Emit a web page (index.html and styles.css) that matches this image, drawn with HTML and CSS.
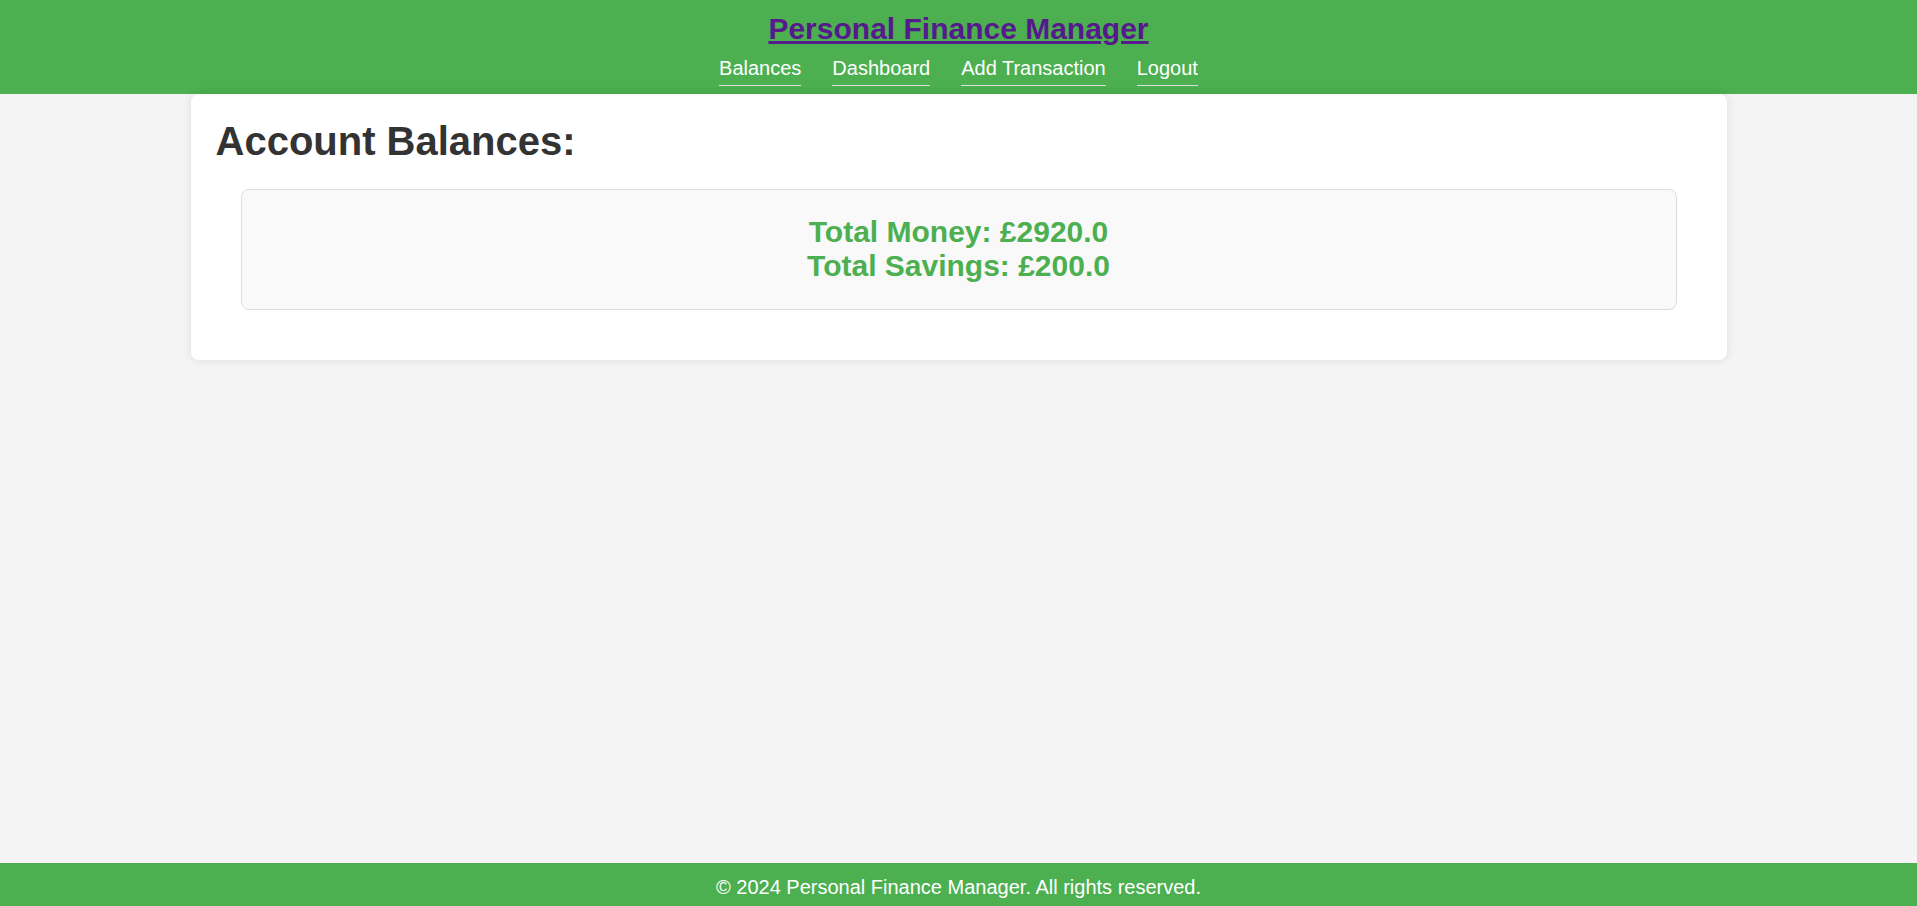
FILE: index.html
```html
<!DOCTYPE html>
<html lang="en">
<head>
<meta charset="utf-8">
<title>Personal Finance Manager</title>
<link rel="stylesheet" href="styles.css">
</head>
<body>
<header class="site-header">
  <h1 class="site-title"><a href="#">Personal Finance Manager</a></h1>
  <nav class="site-nav">
    <a href="#">Balances</a>
    <a href="#">Dashboard</a>
    <a href="#">Add Transaction</a>
    <a href="#">Logout</a>
  </nav>
</header>
<main class="page">
  <section class="card">
    <h2 class="card-title">Account Balances:</h2>
    <div class="totals">
      <div class="total-line">Total Money: £2920.0</div>
      <div class="total-line">Total Savings: £200.0</div>
    </div>
  </section>
</main>
<footer class="site-footer">© 2024 Personal Finance Manager. All rights reserved.</footer>
</body>
</html>
```
FILE: styles.css
```css
* { box-sizing: border-box; }
html, body { margin: 0; padding: 0; }
body {
  font-family: "Liberation Sans", Arial, sans-serif;
  background: #f4f4f4;
  color: #333;
  min-height: 100vh;
  display: flex;
  flex-direction: column;
}
.site-header {
  background: #4caf50;
  height: 94px;
  padding-top: 12px;
  display: flex;
  flex-direction: column;
  align-items: center;
}
.site-title {
  margin: 0;
  font-size: 30px;
  font-weight: bold;
  line-height: normal;
}
.site-title a {
  color: #551a8b;
  text-decoration: underline;
}
.site-nav {
  margin-top: 11px;
  display: flex;
  gap: 31px;
}
.site-nav a {
  color: #fff;
  text-decoration: none;
  font-size: 20px;
  line-height: normal;
  padding-bottom: 5px;
  border-bottom: 1px solid #ddd;
}
.page {
  flex: 1;
  display: flex;
  flex-direction: column;
  align-items: center;
}
.card {
  width: 1536px;
  background: #fff;
  padding: 25px;
  border-radius: 8px;
  box-shadow: 0 0 10px rgba(0, 0, 0, 0.1);
}
.card-title {
  margin: 0 0 25px;
  font-size: 40px;
  font-weight: bold;
  color: #333;
  line-height: normal;
}
.totals {
  margin: 0 25px 25px;
  padding: 25px 25px 26px;
  background: #f9f9f9;
  border: 1px solid #ddd;
  border-radius: 8px;
  text-align: center;
}
.total-line {
  color: #4caf50;
  font-size: 30px;
  font-weight: bold;
  line-height: 34px;
}
.site-footer {
  background: #4caf50;
  color: #fff;
  text-align: center;
  font-size: 20px;
  height: 43px;
  padding-top: 13px;
  line-height: normal;
}
```
